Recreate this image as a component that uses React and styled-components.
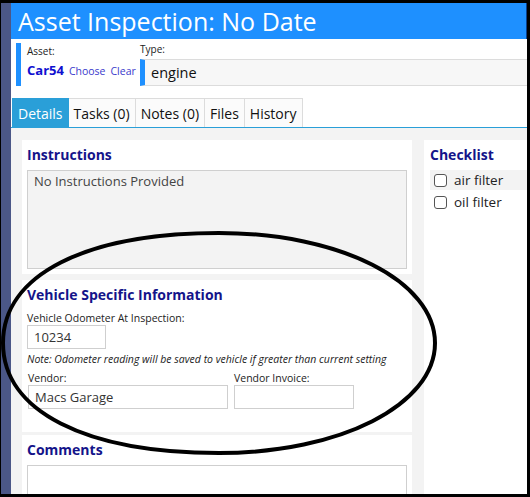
import React from 'react';
import styled, { createGlobalStyle } from 'styled-components';

const GlobalStyle = createGlobalStyle`
  html, body {
    margin: 0;
    padding: 0;
    background: #000;
  }
  body {
    font-family: "Open Sans", "Noto Sans", Arial, sans-serif;
  }
  * {
    box-sizing: border-box;
  }
`;

const Frame = styled.div`
  position: relative;
  display: flex;
  width: 530px;
  height: 497px;
  padding: 3px 3px 3px 1px;
  background: #000;
  overflow: hidden;
`;

const SideStrip = styled.div`
  width: 10px;
  flex-shrink: 0;
  background: #4b5787;
`;

const Page = styled.div`
  flex: 1;
  display: flex;
  flex-direction: column;
  background: #fff;
  min-width: 0;
`;

const Header = styled.h1`
  margin: 0;
  height: 36px;
  padding: 0 7px;
  background: #1e90ff;
  color: #fff;
  font-size: 25px;
  font-weight: 400;
  line-height: 36px;
  white-space: nowrap;
  border-right: 1px solid #0b3f8a;
`;

const InfoRow = styled.div`
  display: flex;
  align-items: flex-start;
  height: 59px;
  padding: 4px 0 0 5px;
`;

const AssetBlock = styled.div`
  display: flex;
  flex-direction: column;
  width: 124px;
  height: 43px;
  padding: 2px 0 0 6px;
  border-left: 5px solid #1e90ff;
`;

const SmallLabel = styled.div`
  font-size: 10px;
  color: #222;
  line-height: 12px;
`;

const AssetLine = styled.div`
  display: flex;
  align-items: baseline;
  gap: 5px;
  margin-top: 4px;
`;

const AssetName = styled.span`
  font-size: 13px;
  font-weight: 700;
  color: #1010d0;
`;

const LinkText = styled.a`
  font-size: 10.5px;
  color: #3a3acc;
  cursor: pointer;
`;

const TypeBlock = styled.div`
  flex: 1;
  display: flex;
  flex-direction: column;
`;

const TypeField = styled.div`
  display: flex;
  align-items: center;
  height: 27px;
  margin-top: 4px;
  padding-left: 6px;
  background: #f7f7f7;
  border-left: 5px solid #1e90ff;
  border-top: 1px solid #dcdcdc;
  border-bottom: 1px solid #dcdcdc;
  font-size: 14.5px;
  color: #111;
`;

const TabBar = styled.div`
  display: flex;
  height: 30px;
  padding-left: 1px;
  border-bottom: 1px solid #2a9fd8;
`;

const Tab = styled.div`
  height: 29px;
  padding: 0 5px;
  line-height: 30px;
  font-size: 14px;
  color: ${p => (p.$active ? '#fff' : '#111')};
  background: ${p => (p.$active ? '#2a9fd8' : '#fbfbfb')};
  border: 1px solid ${p => (p.$active ? '#2a9fd8' : '#dcdcdc')};
  border-left-width: ${p => (p.$first ? '1px' : '0')};
  border-bottom: none;
`;

const Body = styled.div`
  flex: 1;
  display: grid;
  grid-template-columns: 390px 1fr;
  column-gap: 12px;
  padding: 12px 0 0 11px;
  background: #f3f3f3;
  overflow: hidden;
`;

const Column = styled.div`
  display: flex;
  flex-direction: column;
`;

const Card = styled.section`
  background: #fff;
  padding: 5px;
  margin-bottom: ${p => p.$gap || 0}px;
  height: ${p => (p.$h ? `${p.$h}px` : 'auto')};
  flex-shrink: 0;
`;

const CardTitle = styled.h2`
  margin: 0 0 ${p => p.$space || 5}px;
  font-size: 14px;
  font-weight: 700;
  color: #14148a;
  line-height: 20px;
`;

const ReadBox = styled.div`
  height: ${p => p.$h}px;
  padding: 1px 6px;
  background: ${p => p.$bg || '#f3f3f3'};
  border: 1px solid #cfcfcf;
  font-size: 13px;
  color: #444;
`;

const FieldLabel = styled.div`
  font-size: 10.5px;
  color: #222;
  line-height: 13px;
`;

const Input = styled.div`
  width: ${p => p.$w}px;
  height: 24px;
  padding: 0 6px;
  border: 1px solid #cfcfcf;
  font-size: 13px;
  line-height: 22px;
  color: #333;
  background: #fff;
`;

const Note = styled.div`
  margin: 3px 0 6px;
  font-size: 10.5px;
  line-height: 14px;
  font-style: italic;
  color: #222;
  white-space: nowrap;
`;

const FieldRow = styled.div`
  display: flex;
  gap: 6px;
  padding-left: 1px;
`;

const Field = styled.div`
  display: flex;
  flex-direction: column;
`;

const CheckCard = styled.section`
  background: #fff;
  padding: 5px 0 0 6px;
`;

const CheckItem = styled.label`
  display: flex;
  align-items: center;
  gap: 7px;
  height: 20px;
  margin-bottom: 2px;
  padding-left: 4px;
  background: ${p => (p.$shade ? '#f3f3f3' : 'transparent')};
  font-size: 13.5px;
  color: #222;
`;

const Box = styled.span`
  width: 13px;
  height: 13px;
  border: 1px solid #555;
  border-radius: 3px;
  background: #fff;
  flex-shrink: 0;
`;

const Markup = styled.svg`
  position: absolute;
  left: 0;
  top: 0;
  pointer-events: none;
`;

const tabs = ['Details', 'Tasks (0)', 'Notes (0)', 'Files', 'History'];

// pen ring drawn around the vehicle section, a bit fuller on the left
const ring =
  'M 219 233 C 340 233 435 281 435 343 ' +
  'C 435 405 340 453 219 453 ' +
  'C 85 453 3 411 3 343 ' +
  'C 3 275 85 233 219 233 Z';

export default function App() {
  return (
    <>
      <GlobalStyle />
      <Frame>
        <SideStrip />
        <Page>
          <Header>Asset Inspection: No Date</Header>
          <InfoRow>
            <AssetBlock>
              <SmallLabel>Asset:</SmallLabel>
              <AssetLine>
                <AssetName>Car54</AssetName>
                <LinkText>Choose</LinkText>
                <LinkText>Clear</LinkText>
              </AssetLine>
            </AssetBlock>
            <TypeBlock>
              <SmallLabel>Type:</SmallLabel>
              <TypeField>engine</TypeField>
            </TypeBlock>
          </InfoRow>
          <TabBar>
            {tabs.map((t, i) => (
              <Tab key={t} $active={i === 0} $first={i === 0}>
                {t}
              </Tab>
            ))}
          </TabBar>
          <Body>
            <Column>
              <Card $gap={6} $h={134}>
                <CardTitle>Instructions</CardTitle>
                <ReadBox $h={99}>No Instructions Provided</ReadBox>
              </Card>
              <Card $gap={3} $h={152}>
                <CardTitle $space={7}>Vehicle Specific Information</CardTitle>
                <FieldLabel>Vehicle Odometer At Inspection:</FieldLabel>
                <Input $w={79}>10234</Input>
                <Note>Note: Odometer reading will be saved to vehicle if greater than current setting</Note>
                <FieldRow>
                  <Field>
                    <FieldLabel>Vendor:</FieldLabel>
                    <Input $w={200}>Macs Garage</Input>
                  </Field>
                  <Field>
                    <FieldLabel>Vendor Invoice:</FieldLabel>
                    <Input $w={120} />
                  </Field>
                </FieldRow>
              </Card>
              <Card>
                <CardTitle>Comments</CardTitle>
                <ReadBox $h={60} $bg="#fff" />
              </Card>
            </Column>
            <CheckCard>
              <CardTitle>Checklist</CardTitle>
              <CheckItem $shade>
                <Box />
                air filter
              </CheckItem>
              <CheckItem>
                <Box />
                oil filter
              </CheckItem>
            </CheckCard>
          </Body>
        </Page>
        <Markup width="530" height="497" viewBox="0 0 530 497">
          <path d={ring} fill="none" stroke="#000" strokeWidth="4" />
        </Markup>
      </Frame>
    </>
  );
}
